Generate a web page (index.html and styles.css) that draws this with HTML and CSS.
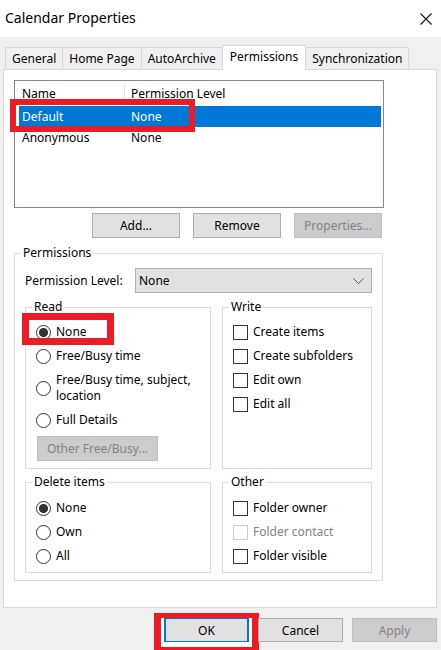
FILE: index.html
```html
<!DOCTYPE html>
<html lang="en">
<head>
<meta charset="utf-8">
<title>Calendar Properties</title>
<link rel="stylesheet" href="styles.css">
</head>
<body>
<div class="window">
  <header class="titlebar">
    <span class="title">Calendar Properties</span>
    <svg class="close" width="12" height="12" viewBox="0 0 12 12" aria-label="Close">
      <path d="M0.5 0.5 L11.5 11.5 M11.5 0.5 L0.5 11.5" stroke="#111" stroke-width="1.1" fill="none"/>
    </svg>
  </header>

  <nav class="tabs">
    <div class="tab">General</div>
    <div class="tab">Home Page</div>
    <div class="tab">AutoArchive</div>
    <div class="tab active">Permissions</div>
    <div class="tab">Synchronization</div>
  </nav>

  <section class="panel">
    <div class="listbox">
      <div class="lhead">
        <div class="c1 hcell">Name</div>
        <div class="c2">Permission Level</div>
      </div>
      <div class="lrow sel">
        <span class="c1">Default</span>
        <span class="c2">None</span>
      </div>
      <div class="lrow">
        <span class="c1">Anonymous</span>
        <span class="c2">None</span>
      </div>
    </div>

    <div class="listbtns">
      <button class="btn">Add...</button>
      <button class="btn">Remove</button>
      <button class="btn disabled">Properties...</button>
    </div>

    <fieldset class="group outer">
      <legend>Permissions</legend>
      <div class="outer-body">
        <div class="levelrow">
          <span class="levellabel">Permission Level:</span>
          <div class="combo">
            <span>None</span>
            <svg class="chev" width="11" height="6" viewBox="0 0 11 6">
              <path d="M0.5 0.5 L5.5 5.5 L10.5 0.5" stroke="#555" stroke-width="1" fill="none"/>
            </svg>
          </div>
        </div>

        <div class="pair">
          <fieldset class="group">
            <legend>Read</legend>
            <div class="items">
              <div class="item"><span class="radio on"></span><span>None</span></div>
              <div class="item"><span class="radio"></span><span>Free/Busy time</span></div>
              <div class="item tall"><span class="radio"></span><span>Free/Busy time, subject, location</span></div>
              <div class="item"><span class="radio"></span><span>Full Details</span></div>
              <button class="btn disabled otherbtn">Other Free/Busy...</button>
            </div>
          </fieldset>
          <fieldset class="group">
            <legend>Write</legend>
            <div class="items">
              <div class="item"><span class="check"></span><span>Create items</span></div>
              <div class="item"><span class="check"></span><span>Create subfolders</span></div>
              <div class="item"><span class="check"></span><span>Edit own</span></div>
              <div class="item"><span class="check"></span><span>Edit all</span></div>
            </div>
          </fieldset>
        </div>

        <div class="pair second">
          <fieldset class="group">
            <legend>Delete items</legend>
            <div class="items low">
              <div class="item"><span class="radio on"></span><span>None</span></div>
              <div class="item"><span class="radio"></span><span>Own</span></div>
              <div class="item"><span class="radio"></span><span>All</span></div>
            </div>
          </fieldset>
          <fieldset class="group">
            <legend>Other</legend>
            <div class="items low">
              <div class="item"><span class="check"></span><span>Folder owner</span></div>
              <div class="item dim"><span class="check"></span><span>Folder contact</span></div>
              <div class="item"><span class="check"></span><span>Folder visible</span></div>
            </div>
          </fieldset>
        </div>
      </div>
    </fieldset>
  </section>

  <footer class="footer">
    <button class="btn fbtn default">OK</button>
    <button class="btn fbtn">Cancel</button>
    <button class="btn fbtn disabled">Apply</button>
  </footer>

  <div class="mark mark-default"></div>
  <div class="mark mark-read"></div>
  <div class="mark mark-ok"></div>
</div>
</body>
</html>
```

FILE: styles.css
```css
* { box-sizing: border-box; }

html, body {
  margin: 0;
  padding: 0;
  background: #f0f0f0;
}

body {
  font-family: "Noto Sans", "Open Sans", sans-serif;
  font-size: 12px;
  color: #000;
}

.window {
  position: relative;
  width: 441px;
  height: 650px;
  overflow: hidden;
  background: #f0f0f0;
}

/* title bar */
.titlebar {
  height: 37px;
  background: #fff;
  display: flex;
  align-items: center;
  justify-content: space-between;
  padding: 0 9px 0 5px;
}
.title {
  font-size: 14px;
  line-height: 18px;
  margin-top: -1px;
}
.close { display: block; margin-top: 1px; }

/* tabs */
.tabs {
  display: flex;
  align-items: flex-end;
  padding-left: 5px;
  margin-top: 8px;
  height: 24px;
  position: relative;
  z-index: 2;
}
.tab {
  height: 22px;
  line-height: 21px;
  padding: 0 6px;
  border: 1px solid #d9d9d9;
  border-bottom: none;
  background: #f0f0f0;
  margin-left: -1px;
  white-space: nowrap;
}
.tab:first-child { margin-left: 0; }
.tab.active {
  height: 25px;
  line-height: 21px;
  background: #fff;
  margin-bottom: -1px;
  padding: 0 7px;
}

/* panel */
.panel {
  margin: 0 4px 0 3px;
  height: 539px;
  background: #fff;
  border: 1px solid #d9d9d9;
  padding: 10px 0 0 10px;
}

.listbox {
  width: 370px;
  height: 128px;
  border: 1px solid #828790;
  background: #fff;
}
.lhead {
  display: flex;
  height: 25px;
  align-items: center;
}
.lhead .c1 {
  width: 110px;
  padding-left: 7px;
  border-right: 1px solid #e5e5e5;
  height: 20px;
  line-height: 20px;
  align-self: flex-start;
  margin-top: 3px;
}
.lhead .c2 { padding-left: 6px; }
.lrow {
  display: flex;
  height: 21px;
  line-height: 21px;
  margin: 0 2px 0 4px;
}
.lrow .c1 { width: 106px; padding-left: 3px; }
.lrow .c2 { padding-left: 6px; }
.lrow.sel { background: #0078d7; color: #fff; }

/* buttons */
.btn {
  font-family: inherit;
  font-size: 12px;
  color: #000;
  background: #e1e1e1;
  border: 1px solid #adadad;
  border-radius: 0;
  padding: 0;
  height: 25px;
  margin: 0;
}
.btn.disabled {
  background: #cccccc;
  border-color: #bfbfbf;
  color: #838383;
}
.listbtns {
  display: flex;
  justify-content: flex-end;
  gap: 13px;
  width: 370px;
  padding-right: 2px;
  margin-top: 5px;
}
.listbtns .btn { width: 88px; }

/* group boxes */
.group {
  margin: 0;
  padding: 0;
  border: 1px solid #dcdcdc;
  min-width: 0;
}
.group legend {
  padding: 0 2px;
  margin-left: 6px;
  line-height: 16px;
}
.outer {
  width: 369px;
  margin-top: 7px;
}
.outer-body {
  padding: 7px 10px 7px 10px;
}

.levelrow {
  display: flex;
  align-items: center;
  height: 25px;
}
.levellabel { width: 110px; }
.combo {
  flex: 1;
  height: 25px;
  background: #e1e1e1;
  border: 1px solid #adadad;
  display: flex;
  align-items: center;
  justify-content: space-between;
  padding: 0 7px 0 3px;
}
.chev { display: block; }

.pair {
  display: grid;
  grid-template-columns: 186px 150px;
  column-gap: 11px;
  margin-top: 6px;
}
.pair.second { margin-top: 5px; }

.items {
  display: flex;
  flex-direction: column;
  align-items: flex-start;
  padding: 5px 8px 7px 10px;
}
.items.low { padding: 6px 8px 4px 10px; }

.item {
  display: flex;
  align-items: center;
  gap: 5px;
  min-height: 24px;
  line-height: 16px;
}
.item.tall { min-height: 40px; }
.item.dim { color: #838383; }

.radio {
  flex: none;
  width: 15px;
  height: 15px;
  border: 1px solid #333;
  border-radius: 50%;
  background: #fff;
}
.radio.on {
  background: radial-gradient(circle, #333 0 4.2px, #fff 4.8px);
}
.check {
  flex: none;
  width: 15px;
  height: 15px;
  border: 1px solid #333;
  background: #fff;
}
.item.dim .check { border-color: #cccccc; }

.otherbtn {
  width: 121px;
  margin: 4px 0 0 1px;
}

/* footer */
.footer {
  display: flex;
  justify-content: flex-end;
  gap: 9px;
  padding: 10px 4px 0 0;
}
.fbtn {
  width: 85px;
  height: 24px;
  position: relative;
  z-index: 2;
}
.fbtn.default {
  border: 1px solid #0078d7;
  box-shadow: inset 1px 0 0 #0078d7, inset -1px 0 0 #0078d7;
}

/* red annotation boxes */
.mark {
  position: absolute;
  border: 6px solid #ed1c24;
  pointer-events: none;
}
.mark-default {
  left: 10px;
  top: 99px;
  width: 185px;
  height: 33px;
}
.mark-read {
  left: 22px;
  top: 313px;
  width: 92px;
  height: 32px;
  border-width: 7px;
}
.mark-ok {
  left: 154px;
  top: 613px;
  width: 105px;
  height: 42px;
  border-width: 5px 7px 8px 7px;
  background: #fff;
  z-index: 1;
}
```
